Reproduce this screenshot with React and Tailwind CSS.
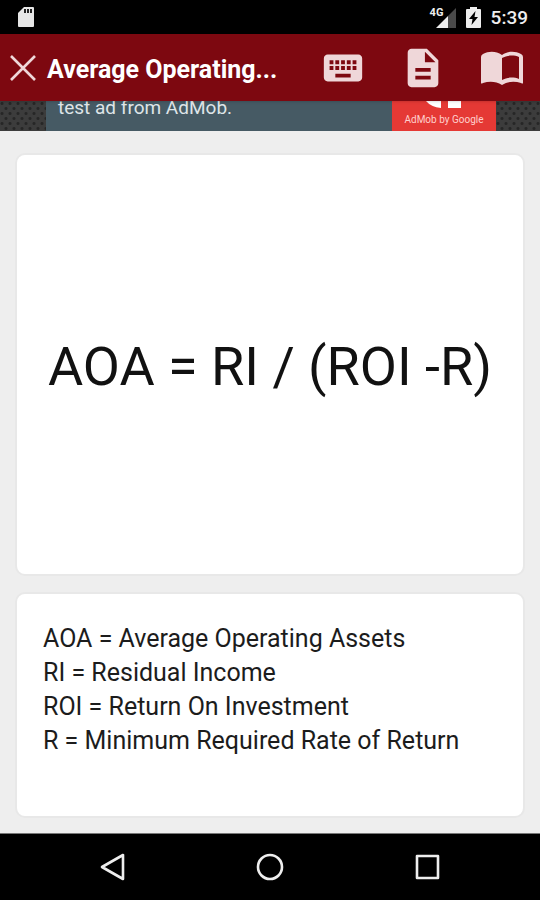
import React from 'react';
import { MdKeyboard, MdDescription } from 'react-icons/md';

const legend = [
  'AOA = Average Operating Assets',
  'RI = Residual Income',
  'ROI = Return On Investment',
  'R = Minimum Required Rate of Return',
];

const BookIcon = () => (
  <svg width="44" height="36" viewBox="0 0 44 36" fill="none" aria-hidden="true">
    <path
      d="M1 7Q1 5 3 4C9 1 16 1 22 5C28 1 35 1 41 4Q43 5 43 7V33Q43 34 41 33C35 31 28 31 22 35C16 31 9 31 3 33Q1 34 1 33Z"
      fill="currentColor"
    />
    <path d="M22 8C27 5 34 5 39 7V29C34 27 27 27 22 30Z" fill="#7d0810" />
  </svg>
);

const StatusBar = () => (
  <div className="flex h-[34px] items-center justify-between bg-black pt-px pr-3 pl-[18px] text-[#eeeeee]">
    <svg width="17" height="21" viewBox="0 0 17 21" aria-hidden="true">
      <path d="M6 0H15Q16 0 16 1V19Q16 20 15 20H1Q0 20 0 19V6Z" fill="#e6e6e6" />
      <path d="M6 2H8V6H6ZM9 2H11V6H9ZM12 2H14V6H12Z" fill="#222222" />
    </svg>
    <div className="flex items-center">
      <div className="relative mr-[10px] h-5 w-[26px]">
        <span className="absolute -top-px left-0 text-[11px] leading-[12px] font-bold">4G</span>
        <svg className="absolute right-0 bottom-0" width="21" height="20" viewBox="0 0 21 20" aria-hidden="true">
          <path d="M21 0V20H13V8Z" fill="#4a4a4a" />
          <path d="M13 8V20H1Z" fill="#eeeeee" />
        </svg>
      </div>
      <svg className="mr-[10px]" width="15" height="21" viewBox="0 0 15 21" aria-hidden="true">
        <path d="M4 0H11V2H14Q15 2 15 3V20Q15 21 14 21H1Q0 21 0 20V3Q0 2 1 2H4Z" fill="#eeeeee" />
        <path d="M9.5 4L3 12H6.5L5.5 18L12 10H8.5Z" fill="#000000" />
      </svg>
      <span className="pt-px text-[19px] leading-6 font-medium">5:39</span>
    </div>
  </div>
);

const AppBar = () => (
  <header className="relative z-10 flex h-[67px] items-center justify-between bg-[#7d0810] pr-4 pl-[9px] text-[#efd7d9] shadow">
    <div className="flex items-center gap-[10px]">
      <button type="button" aria-label="Close">
        <svg width="28" height="28" viewBox="0 0 28 28" aria-hidden="true">
          <path d="M2 2L26 26M26 2L2 26" stroke="currentColor" strokeWidth="2.6" />
        </svg>
      </button>
      <h1 className="pt-1 text-[25px] leading-8 font-bold text-white">Average Operating...</h1>
    </div>
    <div className="flex items-center gap-[34px] pt-px">
      <button type="button" aria-label="Keyboard">
        <MdKeyboard size={46} />
      </button>
      <button type="button" aria-label="Notes">
        <MdDescription size={46} />
      </button>
      <button type="button" aria-label="Book">
        <BookIcon />
      </button>
    </div>
  </header>
);

const AdBanner = () => (
  <div className="flex h-[30px] justify-center overflow-hidden bg-[#3c3c3c] bg-[radial-gradient(circle_at_25%_25%,#262626_1px,transparent_2px),radial-gradient(circle_at_75%_75%,#262626_1px,transparent_2px)] bg-[size:8px_10px]">
    <div className="ml-[2px] flex w-[450px]">
      <p className="flex-1 bg-[#465a64] pl-3 text-[19px] leading-[14px] text-[#dfe5e8]">
        test ad from AdMob.
      </p>
      <div className="flex w-[104px] flex-col items-center bg-[#e53935]">
        <svg width="36" height="8" viewBox="0 0 36 8" aria-hidden="true">
          <path d="M0 0H15V7Q5 6 0 0ZM22 0H35V7H22Z" fill="#ffffff" />
        </svg>
        <span className="text-[10px] leading-[22px] text-[#ffd0cd]">AdMob by Google</span>
      </div>
    </div>
  </div>
);

const NavBar = () => (
  <nav className="flex h-[67px] items-center justify-center gap-[129px] border-t border-[#777777] bg-black text-[#eeeeee]">
    <button type="button" aria-label="Back">
      <svg width="28" height="28" viewBox="0 0 28 28" fill="none" stroke="currentColor" strokeWidth="2.6" strokeLinejoin="round" aria-hidden="true">
        <path d="M3 14L24 2V26Z" />
      </svg>
    </button>
    <button type="button" aria-label="Home">
      <svg width="28" height="28" viewBox="0 0 28 28" fill="none" stroke="currentColor" strokeWidth="2.6" aria-hidden="true">
        <circle cx="14" cy="14" r="12" />
      </svg>
    </button>
    <button type="button" aria-label="Recent apps">
      <svg width="28" height="28" viewBox="0 0 28 28" fill="none" stroke="currentColor" strokeWidth="2.6" strokeLinejoin="round" aria-hidden="true">
        <rect x="4" y="3" width="21" height="22" />
      </svg>
    </button>
  </nav>
);

const App = () => {
  return (
    <div className="flex min-h-screen flex-col bg-[#eeeeee] font-['Roboto',sans-serif]">
      <StatusBar />
      <AppBar />
      <AdBanner />

      <main className="flex flex-1 flex-col gap-4 px-[15px] pt-[22px] pb-[15px]">
        <section className="flex flex-1 items-center justify-center rounded-[10px] border-2 border-[#e8e8e8] bg-white pt-1">
          <p className="text-[54px] leading-[64px] text-[#111111]">AOA = RI / (ROI -R)</p>
        </section>

        <section className="rounded-[10px] border-2 border-[#e8e8e8] bg-white px-[26px] pt-7 pb-[58px]">
          {legend.map(line => (
            <p key={line} className="text-[25px] leading-[34px] text-[#1c1c1c]">{line}</p>
          ))}
        </section>
      </main>

      <NavBar />
    </div>
  );
};

export default App;
